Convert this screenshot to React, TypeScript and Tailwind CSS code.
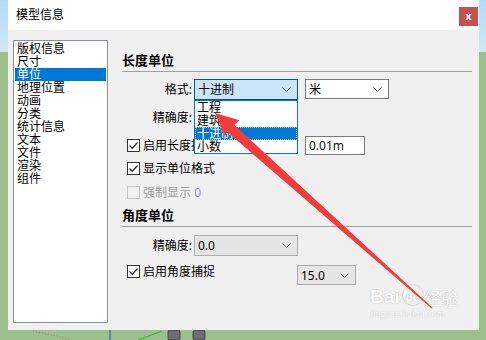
import React from "react";

const Chevron = () => (
  <svg width="9" height="5" viewBox="0 0 9 5" className="shrink-0">
    <polyline points="0.5,0.5 4.5,4.5 8.5,0.5" fill="none" stroke="#5a5a5a" strokeWidth="1" />
  </svg>
);

const Check = ({ disabled }: { disabled?: boolean }) => (
  <div
    className={
      "w-[13px] h-[13px] border shrink-0 flex items-center justify-center " +
      (disabled ? "border-[#c5c5c5] bg-[#f0f0f0]" : "border-[#333333] bg-white")
    }
  >
    {!disabled && (
      <svg width="11" height="11" viewBox="0 0 11 11">
        <polyline points="1.5,5.5 4.2,8.2 9.5,2.5" fill="none" stroke="#333" strokeWidth="1.3" />
      </svg>
    )}
  </div>
);

const listItems = ["版权信息", "尺寸", "单位", "地理位置", "动画", "分类", "统计信息", "文本", "文件", "渲染", "组件"];

export default function App() {
  return (
    <div className="w-[486px] h-[340px] flex overflow-hidden relative bg-[#9cbf8e] text-[12px] text-black font-['Noto_Sans','Noto_Sans_CJK_SC',sans-serif]">
      <div className="w-[8px] h-full bg-[linear-gradient(to_bottom,#b3dbf8_0px,#cfe8f6_52px,#9cbf8e_52px)]" />
      <div className="w-[471px] flex flex-col">
        {/* Dialog */}
        <div className="h-[330px] flex flex-col bg-[#f0f0f0]">
          <div className="h-[30px] bg-white flex items-start justify-between">
            <span className="ml-[8px] mt-[7px] leading-[16px]">模型信息</span>
            <div className="mt-[7px] mr-[1px] w-[19px] h-[19px] bg-[#c75050] text-white flex items-center justify-center text-[11px] font-bold leading-none pb-[2px]">
              x
            </div>
          </div>
          <div className="flex-1 flex pl-[5px] pt-[10px]">
            {/* list box */}
            <div className="w-[95px] h-[283px] border border-[#8e8f98] bg-white pt-[1px] flex flex-col">
              {listItems.map((t) => (
                <div
                  key={t}
                  className={
                    "h-[13px] leading-[13px] mx-[1px] px-[2px] whitespace-nowrap " +
                    (t === "单位" ? "bg-[#0078d7] text-white" : "")
                  }
                >
                  {t}
                </div>
              ))}
            </div>
            {/* right column */}
            <div className="ml-[14px] w-[350px] relative flex flex-col pt-[11px]">
              <div className="h-[18px] leading-[18px] font-bold text-[13px]">长度单位</div>
              <div className="h-px bg-[#a0a0a0] mt-[2px]" />
              {/* 格式 */}
              <div className="mt-[7px] h-[21px] flex items-start">
                <div className="w-[70px] h-[21px] leading-[21px] text-right">格式:</div>
                <div className="ml-[2px] w-[104px] h-[21px] bg-[#cce4f7] border border-[#005499] flex items-center justify-between pl-[3px] pr-[6px]">
                  <span className="leading-[15px]">十进制</span>
                  <Chevron />
                </div>
                <div className="ml-[7px] w-[84px] h-[20px] bg-white border border-[#7a7a7a] flex items-center justify-between pl-[3px] pr-[6px]">
                  <span className="leading-[15px]">米</span>
                  <Chevron />
                </div>
              </div>
              {/* 精确度 (its box is hidden under the open list) */}
              <div className="mt-[7px] h-[21px] flex items-start">
                <div className="w-[70px] h-[21px] leading-[21px] text-right">精确度:</div>
              </div>
              {/* 启用长度捕捉 */}
              <div className="mt-[8px] h-[19px] flex items-center">
                <div className="w-[183px] flex items-center pl-[5px] overflow-hidden">
                  <Check />
                  <span className="ml-[3px] leading-[15px] whitespace-nowrap">启用长度捕</span>
                </div>
                <div className="w-[60px] h-[19px] bg-white border border-[#7a7a7a] flex items-center pl-[3px]">
                  <span className="leading-[15px] text-[#111]">0.01m</span>
                </div>
              </div>
              {/* 显示单位格式 */}
              <div className="mt-[5px] h-[16px] flex items-center pl-[5px]">
                <Check />
                <span className="ml-[3px] leading-[15px]">显示单位格式</span>
              </div>
              {/* 强制显示 0 */}
              <div className="mt-[8px] h-[16px] flex items-center pl-[5px]">
                <Check disabled />
                <span className="ml-[3px] leading-[15px] text-[#9a9a9a]">
                  强制显示 <span className="text-[#8f97b5]">0</span>
                </span>
              </div>
              {/* 角度单位 */}
              <div className="mt-[6px] h-[18px] leading-[18px] font-bold text-[13px]">角度单位</div>
              <div className="h-px bg-[#a0a0a0] mt-[2px]" />
              <div className="mt-[8px] h-[21px] flex items-start">
                <div className="w-[70px] h-[21px] leading-[21px] text-right">精确度:</div>
                <div className="ml-[2px] w-[104px] h-[21px] bg-[#e5e5e5] border border-[#adadad] flex items-center justify-between pl-[3px] pr-[6px]">
                  <span className="leading-[15px]">0.0</span>
                  <Chevron />
                </div>
              </div>
              <div className="mt-[9px] h-[20px] flex items-start">
                <div className="w-[175px] h-[13px] flex items-center pl-[5px]">
                  <Check />
                  <span className="ml-[3px] leading-[15px]">启用角度捕捉</span>
                </div>
                <div className="w-[59px] h-[20px] bg-[#e5e5e5] border border-[#adadad] flex items-center justify-between pl-[3px] pr-[6px]">
                  <span className="leading-[15px]">15.0</span>
                  <Chevron />
                </div>
              </div>

              {/* open dropdown list (overlay) */}
              <div className="absolute left-[72px] top-[60px] w-[104px] h-[54px] bg-white border border-[#0078d7] flex flex-col">
                <div className="h-[13px] leading-[13px] pl-[2px]">工程</div>
                <div className="h-[13px] leading-[13px] pl-[2px]">建筑</div>
                <div className="h-[13px] leading-[12px] pl-[1px] bg-[#0078d7] text-white border border-dotted border-[#f5b35a]">
                  十进制
                </div>
                <div className="h-[13px] leading-[13px] pl-[2px]">小数</div>
              </div>
            </div>
          </div>
        </div>
        {/* ground below dialog */}
        <div className="flex-1">
          <svg width="471" height="10" viewBox="0 0 471 10">
            <line x1="102" y1="0" x2="102" y2="10" stroke="#2f3ee0" strokeWidth="1" />
            <line x1="130" y1="10" x2="154" y2="1" stroke="#22c022" strokeWidth="1" />
            <line x1="25" y1="1" x2="62" y2="9" stroke="#d06a5a" strokeWidth="1" strokeDasharray="1 2" />
            <rect x="160" y="0" width="12" height="10" rx="2" fill="#6f6a75" stroke="#333" strokeWidth="0.8" />
            <rect x="185" y="0" width="12" height="10" rx="2" fill="#6f6a75" stroke="#333" strokeWidth="0.8" />
          </svg>
        </div>
      </div>
      <div className="flex-1 h-full bg-[linear-gradient(to_bottom,#b3dbf8_0px,#cfe8f6_52px,#9cbf8e_52px)]" />

      {/* Baidu watermark */}
      <div className="absolute left-[370px] top-[284px] flex flex-col items-start pointer-events-none">
        <div className="flex items-end leading-none">
          <span className="text-[19px] font-bold text-white [text-shadow:0_0_1px_rgba(0,0,0,0.35)] font-['Liberation_Sans',sans-serif]">Bai</span>
          <span className="ml-[2px] w-[22px] h-[22px] rounded-full border border-[#d8d8d8] text-[11px] font-bold text-white flex items-end justify-center pb-[3px] [text-shadow:0_0_1px_rgba(0,0,0,0.35)]">du</span>
          <span className="ml-[1px] text-[17px] text-white [text-shadow:0_0_1px_rgba(0,0,0,0.35)] font-['Noto_Sans_CJK_SC',sans-serif]">经验</span>
        </div>
        <span className="mt-[3px] text-[10px] leading-[10px] text-white [text-shadow:0_0_1px_rgba(0,0,0,0.3)] font-['Liberation_Serif',serif]">
          jingyan.baidu.com
        </span>
      </div>

      {/* Red annotation arrow */}
      <svg className="absolute left-0 top-0 pointer-events-none" width="486" height="340" viewBox="0 0 486 340">
        <polygon
          points="215,113 239.5,120.2 234.4,124.9 432.4,307.6 431.6,308.4 226.8,131.6 224.7,136.6"
          fill="#f53c3c"
        />
      </svg>
    </div>
  );
}
